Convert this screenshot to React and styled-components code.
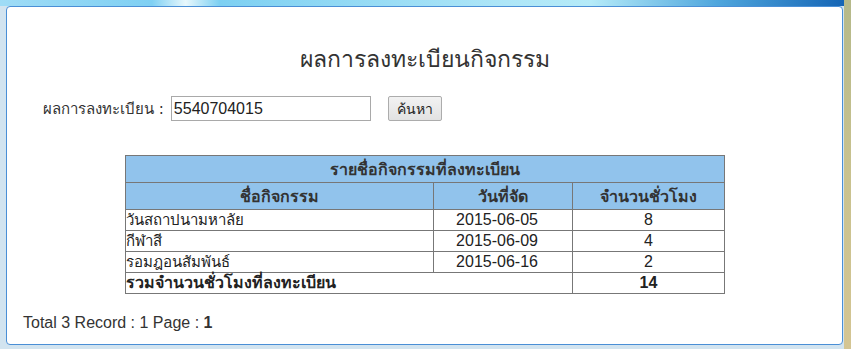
import React from "react";
import styled, { createGlobalStyle } from "styled-components";

const GlobalStyle = createGlobalStyle`
  body {
    margin: 0;
    font-family: Tahoma, "DejaVu Sans", "Liberation Sans", sans-serif;
  }
`;

const activities = [
  { name: "วันสถาปนามหาลัย", date: "2015-06-05", hours: 8 },
  { name: "กีฬาสี", date: "2015-06-09", hours: 4 },
  { name: "รอมฎอนสัมพันธ์", date: "2015-06-16", hours: 2 },
];

const App = () => {
  const total = activities.reduce((sum, a) => sum + a.hours, 0);

  return (
    <Page>
      <GlobalStyle />
      <Main>
        <Banner />
        <Panel>
          <Title>ผลการลงทะเบียนกิจกรรม</Title>
          <SearchForm onSubmit={(e) => e.preventDefault()}>
            <Label htmlFor="sid">ผลการลงทะเบียน :</Label>
            <Input id="sid" type="text" defaultValue="5540704015" />
            <Button type="submit">ค้นหา</Button>
          </SearchForm>

          <Table>
            <colgroup>
              <col style={{ width: 308 }} />
              <col style={{ width: 139 }} />
              <col />
            </colgroup>
            <thead>
              <tr>
                <HeadCell colSpan={3}>รายชื่อกิจกรรมที่ลงทะเบียน</HeadCell>
              </tr>
              <tr>
                <HeadCell>ชื่อกิจกรรม</HeadCell>
                <HeadCell>วันที่จัด</HeadCell>
                <HeadCell>จำนวนชั่วโมง</HeadCell>
              </tr>
            </thead>
            <tbody>
              {activities.map((a) => (
                <tr key={a.name}>
                  <Cell $size={15}>{a.name}</Cell>
                  <Cell $center $date>{a.date}</Cell>
                  <Cell $center>{a.hours}</Cell>
                </tr>
              ))}
              <tr>
                <Cell colSpan={2} $bold>รวมจำนวนชั่วโมงที่ลงทะเบียน</Cell>
                <Cell $center $bold>{total}</Cell>
              </tr>
            </tbody>
          </Table>

          <Footer>
            Total 3 Record : 1 Page : <b>1</b>
          </Footer>
        </Panel>
      </Main>
      <SideStrip />
    </Page>
  );
};

export default App;

const Page = styled.div`
  display: flex;
  width: 851px;
  height: 349px;
  overflow: hidden;
  background: #d2e4f0;
`;

const Main = styled.div`
  display: flex;
  flex-direction: column;
  width: 844px;
`;

const Banner = styled.div`
  height: 6px;
  background: linear-gradient(
    90deg,
    #9fdcf6 0%,
    #7fd0f3 18%,
    #e8f8fc 22%,
    #7dd0f2 26%,
    #aee6f7 60%,
    #b5ebf8 70%,
    #4fa6dd 85%,
    #1565b5 100%
  );
`;

const SideStrip = styled.div`
  width: 7px;
  background: linear-gradient(180deg, #b5b98a 0%, #c9c28f 50%, #d4c593 100%);
`;

const Panel = styled.div`
  margin: 0 1px 4px 6px;
  flex: 1;
  background: #fff;
  border: 1px solid #4a8fd6;
  border-radius: 4px;
  padding: 0 16px;
`;

const Title = styled.h1`
  margin: 37px 0 0;
  text-align: center;
  font-weight: normal;
  font-size: 23px;
  line-height: 30px;
  color: #333;
`;

const SearchForm = styled.form`
  display: flex;
  align-items: center;
  margin: 22px 0 0 20px;
  height: 25px;
`;

const Label = styled.label`
  font-size: 15px;
  color: #333;
  margin-right: 7px;
`;

const Input = styled.input`
  box-sizing: border-box;
  width: 200px;
  height: 25px;
  padding: 0 2px;
  border: 1px solid #a9a9a9;
  font-family: "Liberation Sans", Arial, sans-serif;
  font-size: 16px;
  color: #222;
`;

const Button = styled.button`
  box-sizing: border-box;
  margin-left: 17px;
  height: 25px;
  padding: 0 8px;
  border: 1px solid #acacac;
  border-radius: 2px;
  background: linear-gradient(180deg, #f2f2f2, #e2e2e2);
  font-size: 14px;
  color: #222;
`;

const Table = styled.table`
  margin: 34px 0 0 102px;
  width: 600px;
  table-layout: fixed;
  border-collapse: collapse;
  border: 1px solid #333;
`;

const HeadCell = styled.th`
  height: 26px;
  padding: 0 2px;
  background: #91c3ec;
  border: 1px solid #777;
  font-size: 16px;
  font-weight: bold;
  color: #333;
  text-align: center;
`;

const Cell = styled.td`
  height: 20px;
  padding: 0 ${(p) => (p.$date ? "12px" : "0")} 0 0;
  border: 1px solid #777;
  font-family: "Liberation Sans", Tahoma, "DejaVu Sans", sans-serif;
  font-size: ${(p) => p.$size || 16}px;
  line-height: 18px;
  color: #222;
  text-align: ${(p) => (p.$center ? "center" : "left")};
  font-weight: ${(p) => (p.$bold ? "bold" : "normal")};
`;

const Footer = styled.div`
  margin: 20px 0 0 0;
  font-family: "Liberation Sans", Arial, sans-serif;
  font-size: 16px;
  color: #333;
`;
